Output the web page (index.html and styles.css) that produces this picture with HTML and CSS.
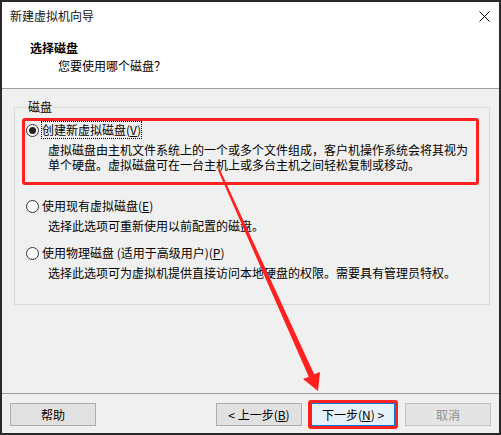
FILE: index.html
```html
<!DOCTYPE html>
<html lang="zh-CN">
<head>
<meta charset="utf-8">
<title>新建虚拟机向导</title>
<link rel="stylesheet" href="styles.css">
</head>
<body>
<div class="window">
  <div class="titlebar">
    <span class="title">新建虚拟机向导</span>
    <svg class="close" width="11" height="11" viewBox="0 0 11 11"><path d="M0.5 0.5 L10.5 10.5 M10.5 0.5 L0.5 10.5" stroke="#000" stroke-width="1" fill="none"/></svg>
  </div>
  <div class="header">
    <div class="h-title">选择磁盘</div>
    <div class="h-sub">您要使用哪个磁盘？</div>
  </div>
  <div class="body">
    <fieldset class="group">
      <legend class="legend">磁盘</legend>
      <div class="opt marked">
        <div class="opt-row">
          <span class="radio checked"></span>
          <span class="opt-label focus">创建新虚拟磁盘(<u>V</u>)</span>
        </div>
        <div class="desc">虚拟磁盘由主机文件系统上的一个或多个文件组成，客户机操作系统会将其视为<br>单个硬盘。虚拟磁盘可在一台主机上或多台主机之间轻松复制或移动。</div>
      </div>
      <div class="opt second">
        <div class="opt-row">
          <span class="radio"></span>
          <span class="opt-label">使用现有虚拟磁盘(<u>E</u>)</span>
        </div>
        <div class="desc">选择此选项可重新使用以前配置的磁盘。</div>
      </div>
      <div class="opt third">
        <div class="opt-row">
          <span class="radio"></span>
          <span class="opt-label">使用物理磁盘 (适用于高级用户)(<u>P</u>)</span>
        </div>
        <div class="desc">选择此选项可为虚拟机提供直接访问本地硬盘的权限。需要具有管理员特权。</div>
      </div>
    </fieldset>
  </div>
  <div class="footer">
    <div class="btn">帮助</div>
    <div class="btn back">&lt; 上一步(<u>B</u>)</div>
    <div class="mark-frame"><div class="btn next">下一步(<u>N</u>) &gt;</div></div>
    <div class="btn cancel">取消</div>
  </div>
  <svg class="arrow" width="501" height="435" viewBox="0 0 501 435">
    <polygon points="218.1,170.4 219.9,169.6 314.2,374.3 320,372 318,391 303,379 308.8,376.7" fill="#ff2020"/>
  </svg>
</div>
</body>
</html>
```

FILE: styles.css
```css
html, body {
  margin: 0;
  padding: 0;
  background: #ffffff;
}

body {
  font-family: "Noto Sans CJK SC", "Microsoft YaHei", sans-serif;
  font-size: 12px;
  color: #000;
}

.window {
  position: relative;
  width: 501px;
  height: 435px;
  box-sizing: border-box;
  border: 2px solid #2a2a2a;
  background: #f0f0f0;
  display: flex;
  flex-direction: column;
  overflow: hidden;
}

.titlebar {
  flex: none;
  height: 28px;
  background: #fff;
  display: flex;
  align-items: center;
  justify-content: space-between;
  padding: 0 9px 0 8px;
}

.title {
  line-height: 18px;
  color: #111;
}

.close {
  display: block;
}

.header {
  flex: none;
  height: 59px;
  box-sizing: border-box;
  background: #fff;
  border-bottom: 1px solid #a0a0a0;
  padding-top: 9px;
}

.h-title {
  font-weight: bold;
  line-height: 18px;
  padding-left: 28px;
}

.h-sub {
  line-height: 18px;
  padding-left: 56px;
}

.body {
  flex: 1;
  padding: 10px 9px 0 12px;
}

.group {
  margin: 0;
  min-width: 0;
  border: 1px solid #d8d8d8;
  padding: 3px 10px 21px 7px;
}

.legend {
  margin-left: 5px;
  padding: 0 1px;
  line-height: 16px;
}

.opt {
  border: 3px solid transparent;
  border-radius: 3px;
}

.opt.marked {
  border-color: #ff2020;
  padding-bottom: 10px;
}

.opt.second {
  margin-top: 9px;
}

.opt.third {
  margin-top: 5px;
}

.opt-row {
  display: flex;
  align-items: center;
  height: 18px;
}

.radio {
  flex: none;
  width: 13px;
  height: 13px;
  box-sizing: border-box;
  border: 1px solid #333;
  border-radius: 50%;
  background: #fff;
  margin-left: 1px;
  display: flex;
  align-items: center;
  justify-content: center;
}

.radio.checked::after {
  content: "";
  width: 7px;
  height: 7px;
  border-radius: 50%;
  background: #222;
}

.opt-label {
  margin-left: 3px;
  line-height: 16px;
}

.opt-label.focus {
  outline: 1px dotted #000;
  outline-offset: 0;
}

.desc {
  padding-left: 23px;
  margin-top: 3px;
  line-height: 15px;
  white-space: nowrap;
}

.footer {
  flex: none;
  height: 40px;
  box-sizing: border-box;
  border-top: 1px solid #a0a0a0;
  display: flex;
  align-items: center;
  padding: 2px 8px 0 8px;
}

.btn {
  width: 86px;
  height: 23px;
  box-sizing: border-box;
  border: 1px solid #adadad;
  background: #e1e1e1;
  display: flex;
  align-items: center;
  justify-content: center;
  line-height: 16px;
}

.back {
  margin-left: auto;
}

.mark-frame {
  margin-left: 6px;
  border: 3px solid #ff2020;
  border-radius: 3px;
  display: flex;
}

.next {
  width: 84px;
  background: #e5f1fb;
  border-color: #0078d7;
}

.cancel {
  margin-left: 7px;
  background: #e4e4e4;
  border-color: #c2c2c2;
  color: #8f8f8f;
}

.arrow {
  position: absolute;
  top: -2px;
  left: -2px;
  pointer-events: none;
}
```
